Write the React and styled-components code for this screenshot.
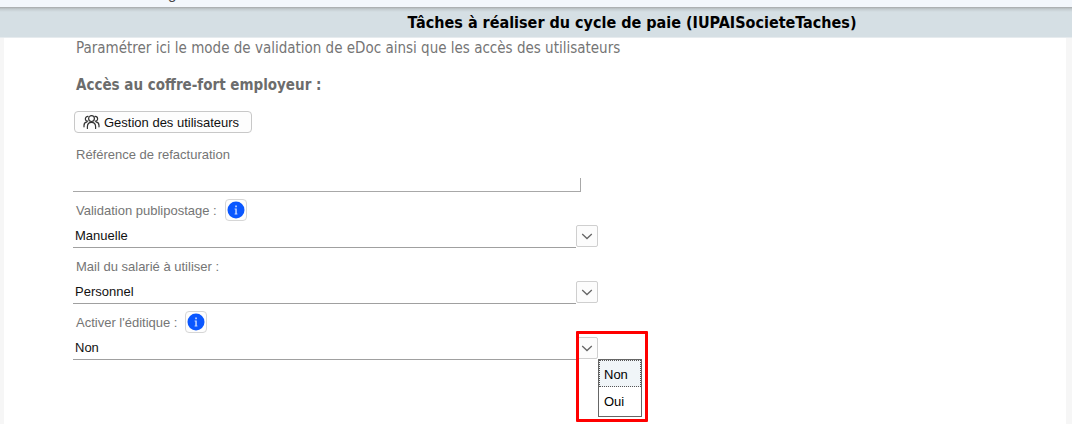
import styled, { createGlobalStyle } from 'styled-components';

const GlobalStyle = createGlobalStyle`
  * {
    box-sizing: border-box;
  }
  body {
    margin: 0;
    background: #f6f6f6;
    font-family: 'Liberation Sans', Arial, sans-serif;
    font-size: 13px;
    color: #000;
  }
`;

const TopStrip = styled.div`
  display: flex;
  align-items: flex-end;
  height: 7px;
  padding-left: 168px;
  overflow: hidden;
  background: #f3f7fc;
  color: #444;
  font-size: 15px;
  line-height: 20px;
`;

const TopText = styled.span`
  height: 23px;
`;

const TitleBar = styled.header`
  height: 31px;
  border-bottom: 1px solid #e6ebee;
  background: linear-gradient(#a6a8aa, #c3cbcf 2px, #d5dfe4 5px);
`;

const Title = styled.h1`
  margin: 0 0 0 192px;
  text-align: center;
  font-family: 'DejaVu Sans Condensed', 'DejaVu Sans', sans-serif;
  font-size: 16px;
  line-height: 31px;
`;

const Panel = styled.main`
  min-height: calc(100vh - 38px);
  margin: 0 6px 0 4px;
  padding: 0 24px 8px 69px;
  background: #fff;
`;

const Intro = styled.p`
  margin: 0;
  padding-left: 3px;
  color: #757575;
  font-family: 'DejaVu Sans Condensed', 'DejaVu Sans', sans-serif;
  font-size: 15px;
  line-height: 20px;
`;

const SectionTitle = styled.h2`
  margin: 17px 0 16px;
  padding-left: 3px;
  color: #6c6c6c;
  font-family: 'DejaVu Sans Condensed', 'DejaVu Sans', sans-serif;
  font-size: 15px;
  line-height: 20px;
`;

const UsersButton = styled.button`
  display: flex;
  align-items: center;
  gap: 4px;
  height: 22px;
  margin-left: 1px;
  padding: 0 12px 0 8px;
  border: 1px solid #c8c8c8;
  border-radius: 4px;
  background: #fdfdfd;
  color: #111;
  font: inherit;
`;

const Form = styled.form`
  display: flex;
  flex-direction: column;
  gap: 6px;
  max-width: 525px;
  margin-top: 9px;
`;

const Field = styled.div`
  display: flex;
  flex-direction: column;
  gap: 2px;
`;

const LabelRow = styled.div`
  display: flex;
  align-items: center;
  gap: 8px;
  height: 24px;
  padding-left: 3px;
  color: #757575;
`;

const ReferenceInput = styled.input`
  width: calc(100% - 17px);
  height: 14px;
  margin-top: 10px;
  padding: 0 3px;
  border: solid #a8a8a8;
  border-width: 0 1px 1px 0;
  background: #fff;
  font: inherit;
  outline: none;
`;

const InfoButton = styled.button`
  display: flex;
  align-items: center;
  justify-content: center;
  width: 22px;
  height: 22px;
  padding: 0;
  border: 1px solid #d6d6d6;
  border-radius: 4px;
  background: #fdfdfd;
`;

const SelectRow = styled.div`
  position: relative;
  display: flex;
  align-items: center;
  height: 24px;
`;

const Select = styled.select`
  flex: 1;
  height: 24px;
  padding: 0 2px;
  border: 0;
  border-bottom: 1px solid #a0a0a0;
  border-radius: 0;
  background: #fff;
  color: #111;
  font: inherit;
  appearance: none;
  outline: none;
`;

const ArrowButton = styled.button`
  display: flex;
  align-items: center;
  justify-content: center;
  width: 22px;
  height: 22px;
  padding: 0;
  border: 1px solid #cfcfcf;
  border-radius: 2px;
  background: #fcfcfc;
`;

const Menu = styled.ul`
  position: absolute;
  top: 23px;
  left: 100%;
  width: 44px;
  margin: 0;
  padding: 0 0 2px;
  border: 1px solid #666;
  background: #fff;
  list-style: none;
`;

const MenuItem = styled.li`
  height: 27px;
  padding-left: 4px;
  border: 1px dotted ${({ $active }) => ($active ? '#555' : 'transparent')};
  background: ${({ $active }) => ($active ? '#f0f5f8' : '#fff')};
  line-height: 27px;
`;

const Highlight = styled.div`
  position: absolute;
  top: -5px;
  right: -50px;
  width: 72px;
  height: 91px;
  border: 3px solid #f00;
  border-radius: 1px;
  pointer-events: none;
`;

const UsersIcon = () => (
  <svg width='17' height='16' viewBox='0 0 17 16' fill='none' stroke='#333' strokeWidth='1.2' strokeLinecap='round'>
    <circle cx='8.5' cy='4.6' r='2.9' />
    <path d='M4.6 7.2A2.4 2.4 0 1 1 5 2.4M12.4 7.2A2.4 2.4 0 1 0 12 2.4' />
    <path d='M4.4 14.4v-1.6c0-2.8 1.6-4.4 4.1-4.4s4.1 1.6 4.1 4.4v1.6' />
    <path d='M1 12.8v-1.4c0-2 1.1-3.4 3-3.6M16 12.8v-1.4c0-2-1.1-3.4-3-3.6' />
  </svg>
);

const InfoIcon = () => (
  <svg width='18' height='18' viewBox='0 0 18 18'>
    <circle cx='9' cy='9' r='8.5' fill='#0a57ff' />
    <path d='M8.2 4.6h1.7v1.7H8.2zM7.6 7.6h2.2v4.8h.6v1H7.6v-1h.7V8.6h-.7z' fill='#c4d6ff' />
  </svg>
);

const ChevronIcon = () => (
  <svg width='12' height='8' viewBox='0 0 12 8' fill='none' stroke='#666' strokeWidth='1.3'>
    <path d='M1.2 2L6 6.5L10.8 2' />
  </svg>
);

const fields = [
  {
    id: 'validation',
    label: 'Validation publipostage :',
    options: ['Manuelle', 'Automatique'],
    info: true,
  },
  {
    id: 'mail',
    label: 'Mail du salarié à utiliser :',
    options: ['Personnel', 'Professionnel'],
  },
  {
    id: 'editique',
    label: "Activer l'éditique :",
    options: ['Non', 'Oui'],
    info: true,
    open: true,
  },
];

const SelectField = ({ id, label, options, info, open }) => (
  <Field>
    <LabelRow>
      <label htmlFor={id}>{label}</label>
      {info && (
        <InfoButton type='button' aria-label='Informations'>
          <InfoIcon />
        </InfoButton>
      )}
    </LabelRow>
    <SelectRow>
      <Select id={id} defaultValue={options[0]}>
        {options.map((option) => (
          <option key={option}>{option}</option>
        ))}
      </Select>
      <ArrowButton type='button' aria-label='Ouvrir la liste' aria-expanded={!!open}>
        <ChevronIcon />
      </ArrowButton>
      {open && (
        <>
          <Menu role='listbox' aria-label={label}>
            {options.map((option, index) => (
              <MenuItem key={option} role='option' aria-selected={index === 0} $active={index === 0}>
                {option}
              </MenuItem>
            ))}
          </Menu>
          <Highlight />
        </>
      )}
    </SelectRow>
  </Field>
);

const App = () => {
  return (
    <>
      <GlobalStyle />
      <TopStrip>
        <TopText>g</TopText>
      </TopStrip>
      <TitleBar>
        <Title>Tâches à réaliser du cycle de paie (IUPAISocieteTaches)</Title>
      </TitleBar>
      <Panel>
        <Intro>
          Paramétrer ici le mode de validation de eDoc ainsi que les accès des utilisateurs
        </Intro>
        <SectionTitle>Accès au coffre-fort employeur :</SectionTitle>
        <UsersButton type='button'>
          <UsersIcon />
          Gestion des utilisateurs
        </UsersButton>
        <Form>
          <Field>
            <LabelRow>
              <label htmlFor='reference'>Référence de refacturation</label>
            </LabelRow>
            <ReferenceInput id='reference' type='text' />
          </Field>
          {fields.map((field) => (
            <SelectField key={field.id} {...field} />
          ))}
        </Form>
      </Panel>
    </>
  );
};

export default App;
